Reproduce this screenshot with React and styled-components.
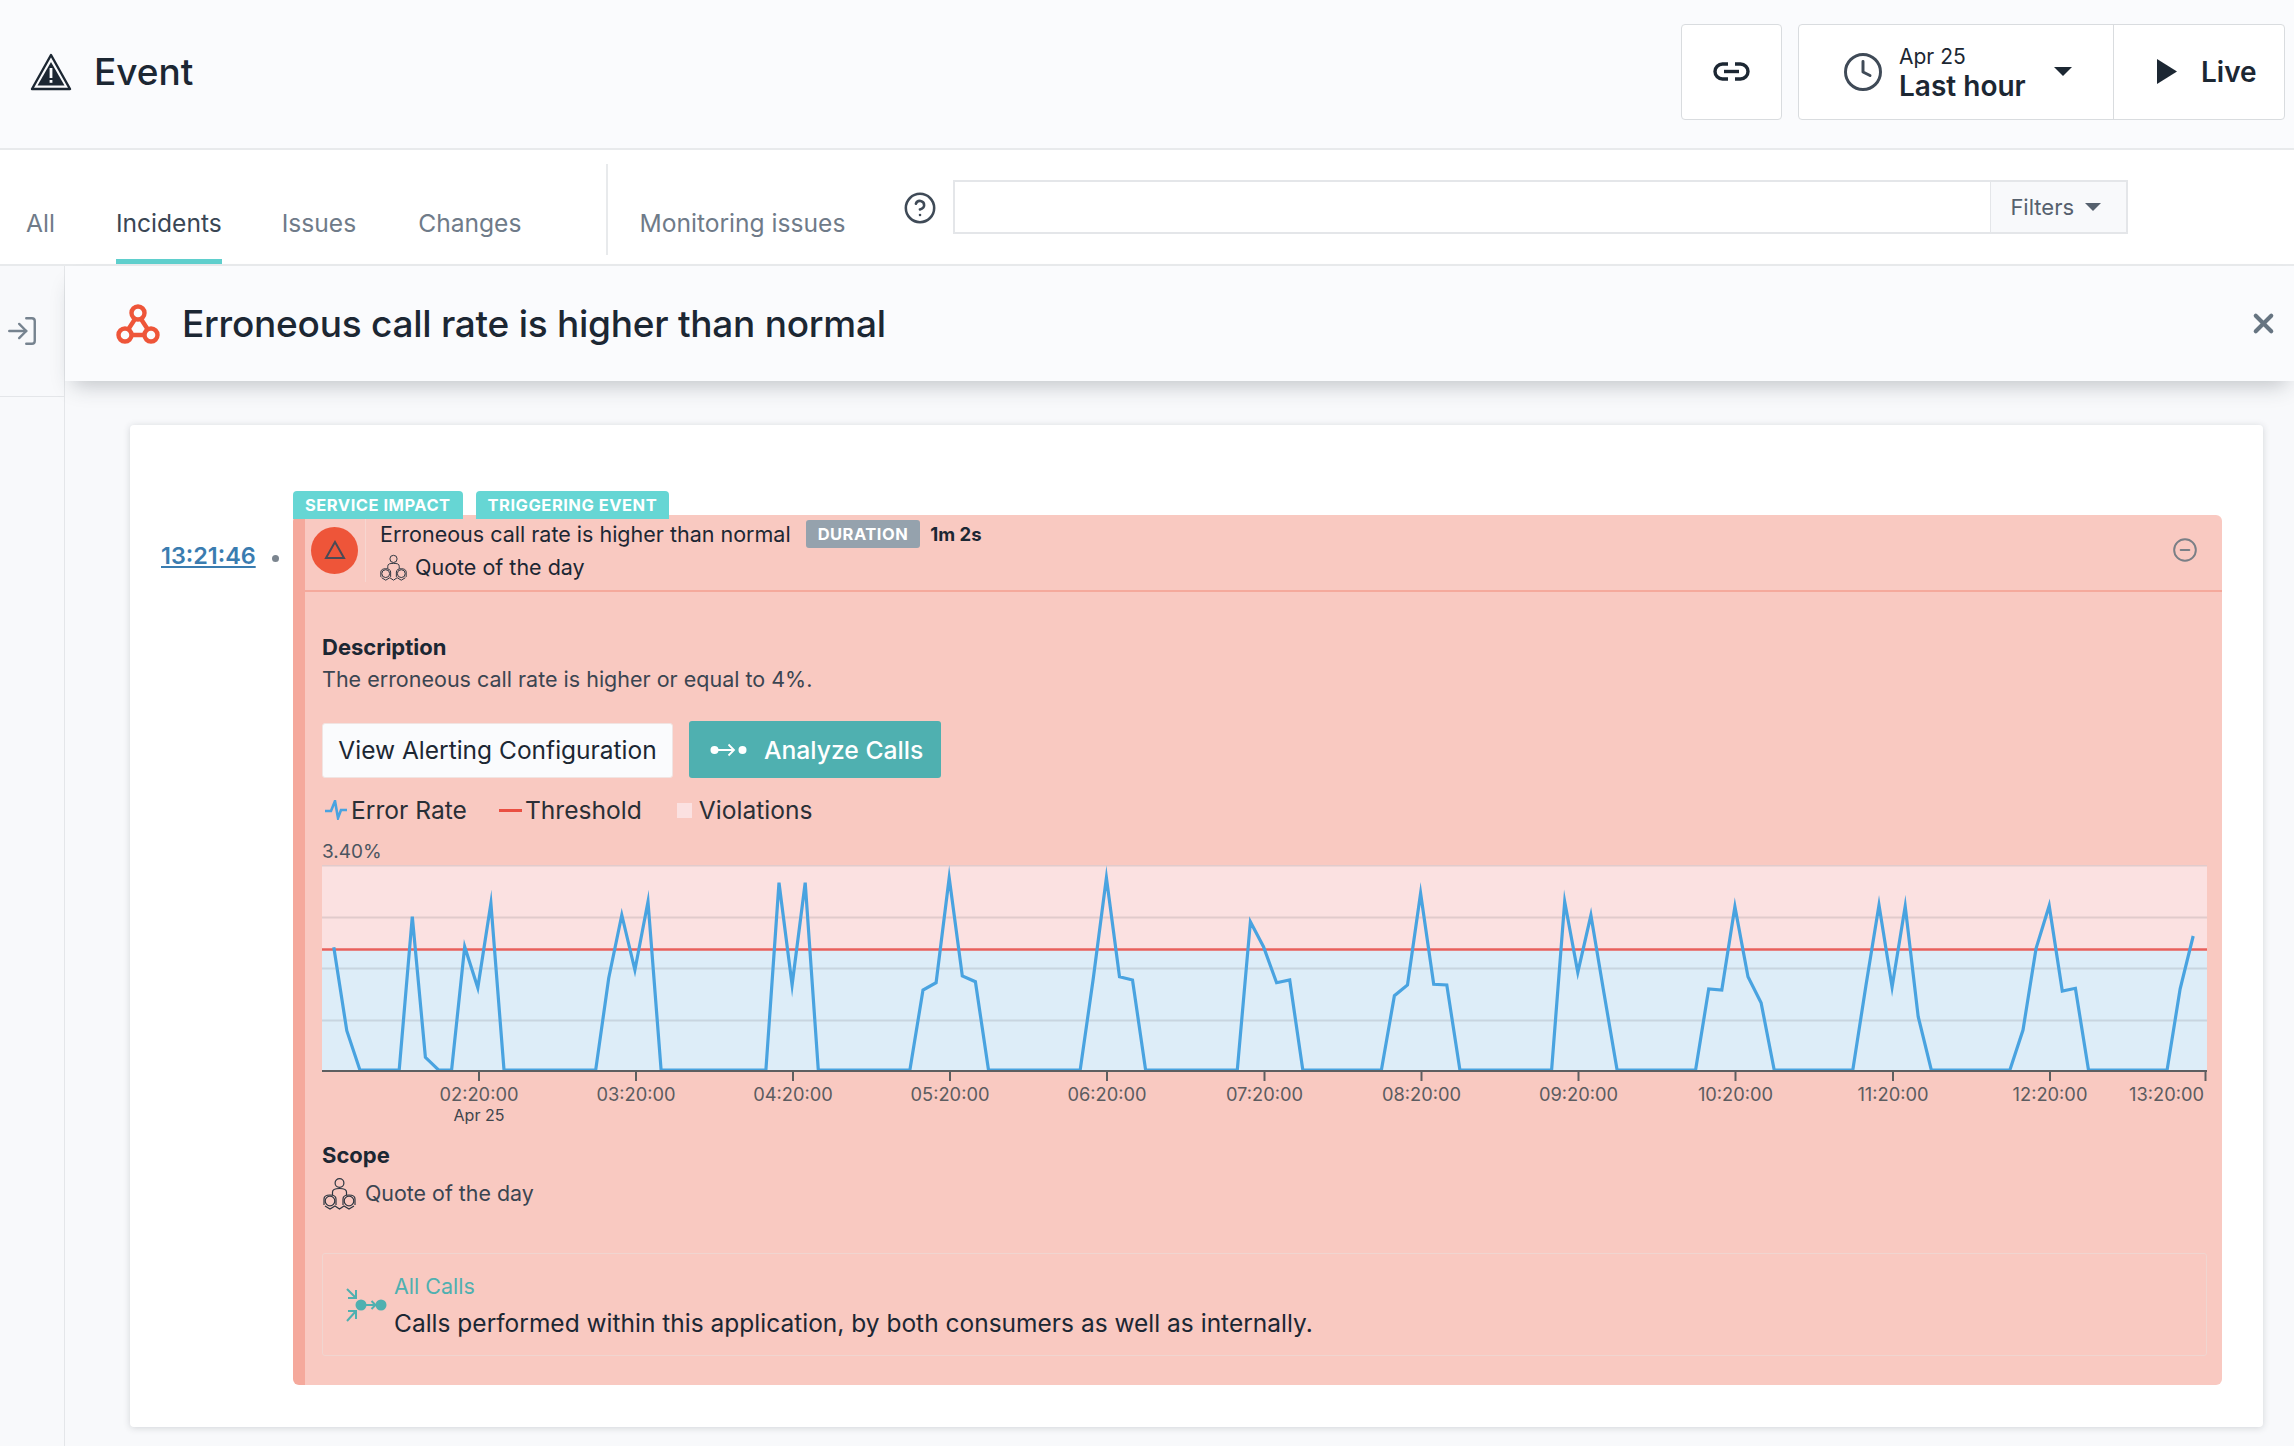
import styled, { createGlobalStyle } from 'styled-components'
import { Clock, HelpCircle, LogIn, X, MinusCircle } from 'lucide-react'

const GlobalStyle = createGlobalStyle`
  html, body { margin:0; padding:0; background:#fff; }
  body { font-family:Inter, "Liberation Sans", sans-serif; color:#1c2733; }
`

const Page = styled.div`
  width:2294px;
  height:1446px;
  overflow:hidden;
  display:flex;
  flex-direction:column;
`

const TopBar = styled.header`
  height:150px;
  flex:none;
  box-sizing:border-box;
  background:#fafbfd;
  border-bottom:2px solid #e8eaec;
  display:flex;
  align-items:center;
  padding:0 9px 5px 30px;
`

const PageTitle = styled.h1`
  margin:0 0 0 22px;
  font-size:37px;
  font-weight:500;
  flex:1;
`

const IconButton = styled.div`
  width:101px;
  height:96px;
  box-sizing:border-box;
  border:1px solid #d9dcdf;
  border-radius:4px;
  background:#fff;
  display:flex;
  align-items:center;
  justify-content:center;
  margin-right:16px;
`

const TimeGroup = styled.div`
  width:487px;
  height:96px;
  box-sizing:border-box;
  border:1px solid #d9dcdf;
  border-radius:4px;
  background:#fff;
  display:flex;
`

const TimeRange = styled.div`
  width:315px;
  box-sizing:border-box;
  border-right:1px solid #d9dcdf;
  display:flex;
  align-items:center;
  padding-left:43px;
`

const DateStack = styled.div`
  margin:2px 0 0 15px;
  width:155px;
  line-height:1;
`

const DateSmall = styled.div`
  font-size:21px;
  height:26px;
  line-height:26px;
`

const DateBig = styled.div`
  font-size:28px;
  font-weight:600;
  height:32px;
  line-height:32px;
`

const Caret = styled.span`
  display:block;
  width:0;
  height:0;
  border-left:${p => p.size}px solid transparent;
  border-right:${p => p.size}px solid transparent;
  border-top:${p => p.size}px solid ${p => p.color};
`

const LiveButton = styled.div`
  flex:1;
  display:flex;
  align-items:center;
  padding-left:43px;
  gap:24px;
  font-size:28px;
  font-weight:600;
`

const TabsBar = styled.nav`
  height:116px;
  flex:none;
  box-sizing:border-box;
  background:#fff;
  border-bottom:2px solid #e8eaec;
  display:flex;
  align-items:stretch;
  padding-left:26px;
`

const Tab = styled.div`
  margin-right:${p => p.gap}px;
  display:flex;
  align-items:flex-end;
  padding-bottom:26px;
  box-sizing:border-box;
  height:114px;
  font-size:24.6px;
  line-height:30px;
  color:${p => p.active ? '#3a4654' : '#6f7b89'};
  ${p => p.active && `border-bottom:5px solid #5fcfcd; padding-bottom:21px;`}
`

const TabDivider = styled.div`
  width:2px;
  height:91px;
  margin:14px 31px 0 0;
  background:#e8eaec;
`

const HelpSlot = styled.div`
  margin-left:58px;
  margin-right:16px;
  padding-top:41px;
  color:#3f4a57;
`

const SearchBox = styled.div`
  margin-top:30px;
  width:1175px;
  height:54px;
  box-sizing:border-box;
  border:2px solid #e4e6e9;
  background:#fff;
  display:flex;
  justify-content:flex-end;
`

const FiltersButton = styled.div`
  width:136px;
  box-sizing:border-box;
  border-left:1px solid #e4e6e9;
  background:#f8f9fb;
  display:flex;
  align-items:center;
  gap:11px;
  padding-left:19px;
  font-size:22px;
  color:#56616e;
`

const Body = styled.div`
  flex:1;
  display:flex;
  min-height:0;
`

const SideRail = styled.aside`
  width:65px;
  flex:none;
  box-sizing:border-box;
  border-right:1px solid #e4e6e9;
  background:#f8f9fb;
`

const RailSlot = styled.div`
  height:131px;
  box-sizing:border-box;
  border-bottom:1px solid #e4e6e9;
  padding:48px 0 0 5px;
  color:#76838f;
`

const Main = styled.main`
  flex:1;
  min-width:0;
  background:#f8f9fb;
`

const PanelHeader = styled.div`
  height:115px;
  box-sizing:border-box;
  background:#fafbfd;
  box-shadow:0 12px 20px -8px rgba(40,50,60,0.28);
  display:flex;
  align-items:center;
  padding:0 15px 0 51px;
  position:relative;
`

const PanelTitle = styled.h2`
  margin:0 0 0 22px;
  flex:1;
  font-size:37px;
  font-weight:500;
  letter-spacing:-0.25px;
`

const Card = styled.section`
  margin:44px 31px 0 65px;
  height:1002px;
  box-sizing:border-box;
  padding:66px 41px 0 31px;
  background:#fff;
  border-radius:4px;
  box-shadow:0 1px 7px rgba(40,50,60,0.18);
  display:flex;
`

const TimeCell = styled.div`
  width:132px;
  flex:none;
  padding-top:53px;
  display:flex;
  align-items:center;
  height:24px;
  gap:16px;
`

const TimeLink = styled.a`
  font-size:23.4px;
  font-weight:600;
  line-height:24px;
  color:#3a7cb0;
  text-decoration:underline;
`

const TimeDot = styled.span`
  width:7px;
  height:7px;
  margin-top:4px;
  border-radius:50%;
  background:#7b858f;
`

const EventColumn = styled.div`
  flex:1;
  min-width:0;
`

const TagRow = styled.div`
  height:24px;
  display:flex;
  gap:13px;
  position:relative;
  z-index:1;
`

const Tag = styled.span`
  height:28px;
  box-sizing:border-box;
  padding:0 12px;
  border-radius:4px 4px 0 0;
  background:#66d6d4;
  color:#fff;
  font-size:16.5px;
  font-weight:700;
  letter-spacing:0.5px;
  line-height:29px;
`

const EventBox = styled.div`
  height:870px;
  box-sizing:border-box;
  background:#f9c9c1;
  border-left:12px solid #f5a99c;
  border-radius:6px;
`

const EventHead = styled.div`
  height:77px;
  box-sizing:border-box;
  border-bottom:2px solid #f5a99c;
  display:flex;
  align-items:center;
  padding:0 24px 0 6px;
`

const SeverityDot = styled.div`
  width:47px;
  height:47px;
  margin-bottom:5px;
  flex:none;
  border-radius:50%;
  background:#ee5539;
  display:flex;
  align-items:center;
  justify-content:center;
`

const HeadText = styled.div`
  flex:1;
  margin:0 0 6px 7px;
  height:64px;
  padding-left:14px;
  border-left:1px solid #f7d6d0;
  font-size:21.5px;
`

const HeadLine = styled.div`
  display:flex;
  align-items:center;
  height:33px;
`

const HeadSecond = styled(HeadLine)`
  height:33px;
  gap:8px;
`

const DurationBadge = styled.span`
  margin-left:15px;
  height:28px;
  padding:0 12px;
  border-radius:3px;
  background:#95a2ad;
  color:#fff;
  font-size:16.5px;
  font-weight:700;
  letter-spacing:0.5px;
  line-height:29px;
`

const DurationValue = styled.span`
  margin-left:10px;
  font-size:18.5px;
  font-weight:700;
`

const Collapse = styled.div`
  margin-bottom:5px;
  display:flex;
  color:#7a7f86;
`

const EventBody = styled.div`
  padding:41px 15px 0 17px;
`

const SectionLabel = styled.div`
  font-size:22px;
  font-weight:700;
  line-height:28px;
`

const Paragraph = styled.div`
  margin-top:4px;
  font-size:21.5px;
  line-height:28px;
  color:#3b4551;
`

const ButtonRow = styled.div`
  margin-top:28px;
  display:flex;
  align-items:flex-end;
  gap:16px;
`

const PlainButton = styled.div`
  width:351px;
  height:55px;
  box-sizing:border-box;
  border:1px solid #f1e4e2;
  border-radius:3px;
  background:#fafbfd;
  font-size:24.5px;
  line-height:53px;
  text-align:center;
`

const TealButton = styled.div`
  width:252px;
  height:57px;
  border-radius:3px;
  background:#4fb0b0;
  color:#fff;
  font-size:24.7px;
  font-weight:500;
  display:flex;
  align-items:center;
  gap:17px;
  padding-left:21px;
  box-sizing:border-box;
`

const Legend = styled.div`
  margin-top:17px;
  height:30px;
  display:flex;
  align-items:center;
  font-size:24.6px;
  color:#2a2f36;
`

const LegendItem = styled.div`
  display:flex;
  align-items:center;
  gap:${p => p.gap}px;
  margin-right:${p => p.after}px;
  margin-left:${p => p.before || 0}px;
`

const ThresholdSwatch = styled.span`
  width:23px;
  height:3px;
  background:#ea4f42;
`

const ViolationSwatch = styled.span`
  width:15px;
  height:15px;
  background:#fbe1e1;
`

const ChartMax = styled.div`
  margin-top:14px;
  font-size:19px;
  line-height:26px;
  color:#4b5560;
`

const ChartSvg = styled.svg`
  display:block;
  width:1885px;
  height:270px;
  font-family:Inter, sans-serif;
`

const ScopeLabel = styled(SectionLabel)`
  margin-top:6px;
`

const ScopeRow = styled.div`
  margin-top:6px;
  height:36px;
  padding-left:1px;
  display:flex;
  align-items:center;
  gap:9px;
  font-size:21.4px;
  color:#3b4551;
`

const CallsBox = styled.div`
  margin-top:42px;
  height:103px;
  box-sizing:border-box;
  border:1px solid #f0d5d0;
  border-radius:3px;
  display:flex;
  align-items:center;
  padding:0 0 0 22px;
  gap:7px;
`

const CallsText = styled.div``

const CallsName = styled.div`
  font-size:21.5px;
  line-height:30px;
  color:#4fb0b0;
`

const CallsDescription = styled.div`
  margin-top:7px;
  font-size:24.5px;
  line-height:30px;
`

function WarningIcon() {
  return (
    <svg width="42" height="38" viewBox="0 0 42 38">
      <path d="M21 2 L40 36 H2 Z" fill="none" stroke="#1c2733" strokeWidth="2.4" strokeLinejoin="round" />
      <path d="M21 9 L34.5 32.5 H7.5 Z" fill="#1c2733" />
      <rect x="19.6" y="15" width="2.8" height="10" fill="#fafbfd" />
      <rect x="19.6" y="27" width="2.8" height="2.8" fill="#fafbfd" />
    </svg>
  )
}

function LinkIcon() {
  return (
    <svg width="37" height="19" viewBox="0 0 37 19" fill="none" stroke="#1c2733" strokeWidth="3.4">
      <path d="M15 2 H9.5 a7.5 7.5 0 0 0 0 15 H15" />
      <path d="M22 2 H27.5 a7.5 7.5 0 0 1 0 15 H22" />
      <path d="M11 9.5 H26" />
    </svg>
  )
}

function PlayIcon() {
  return (
    <svg width="20" height="25" viewBox="0 0 20 25"><path d="M0 0 L20 12.5 L0 25 Z" fill="#1c2733" /></svg>
  )
}

function ClusterIcon() {
  return (
    <svg width="44" height="40" viewBox="0 0 44 40" fill="none" stroke="#ee5539" strokeWidth="4.4">
      <circle cx="22" cy="9" r="6.5" />
      <circle cx="9" cy="31" r="6.5" />
      <circle cx="35" cy="31" r="6.5" />
      <path d="M19 15 L12.5 25 M25 15 L31.5 25 M15.5 31 H28.5" />
    </svg>
  )
}

function AppIcon({ size }) {
  return (
    <svg width={size} height={size} viewBox="0 0 33 33" fill="none" stroke="#2d3540" strokeWidth="1.2">
      <circle cx="16.5" cy="6" r="4.4" />
      <path d="M9.5 18 V15 C9.5 12 12 11.5 16.5 11.5 C21 11.5 23.5 12 23.5 15 V18" />
      <circle cx="7" cy="24" r="4.8" />
      <circle cx="26" cy="24" r="4.8" />
      <path d="M1 28 V22 C1 19 4 18 7 18 C10 18 13 19 13 22 V28" />
      <path d="M20 28 V22 C20 19 23 18 26 18 C29 18 32 19 32 22 V28" />
      <path d="M2 29 L7 32 L12 29 L16.5 32 L21 29 L26 32 L31 29" />
    </svg>
  )
}

function AnalyzeIcon() {
  return (
    <svg width="37" height="14" viewBox="0 0 37 14" fill="none" stroke="#fff" strokeWidth="1.8">
      <circle cx="4.5" cy="7" r="4" fill="#fff" stroke="none" />
      <circle cx="32.5" cy="7" r="4" fill="#fff" stroke="none" />
      <path d="M8 7 H24 M18.5 1.5 L24 7 L18.5 12.5" />
    </svg>
  )
}

function PulseIcon() {
  return (
    <svg width="22" height="20" viewBox="0 0 22 20" fill="none" stroke="#49a3e0" strokeWidth="2.6">
      <path d="M0 11 H6 L10 1 L13 18 L16 10 H22" />
    </svg>
  )
}

function AllCallsIcon() {
  return (
    <svg width="42" height="36" viewBox="0 0 42 36" fill="none" stroke="#4fb0b0" strokeWidth="2">
      <path d="M2 2 L11 11 M11 3 V11 H3" />
      <path d="M2 34 L11 24 M3 24 H11 V32" />
      <circle cx="16" cy="18" r="5.5" fill="#4fb0b0" stroke="none" />
      <circle cx="36" cy="18" r="5.5" fill="#4fb0b0" stroke="none" />
      <path d="M21 18 H30 M26.5 14 L30.5 18 L26.5 22" />
    </svg>
  )
}

// y values read off the reference, one sample each 5 minutes
const samples = [
  322, 572, 690, 690, 690, 690, 230, 652, 690, 690, 320, 443, 190, 690, 690, 690, 690, 690, 690, 690,
  690, 415, 225, 390, 185, 690, 690, 690, 690, 690, 690, 690, 690, 690, 128, 435, 128, 690, 690, 690,
  690, 690, 690, 690, 690, 450, 428, 113, 408, 425, 690, 690, 690, 690, 690, 690, 690, 690, 415, 113,
  410, 420, 690, 690, 690, 690, 690, 690, 690, 690, 245, 320, 428, 420, 690, 690, 690, 690, 690, 690,
  690, 467, 435, 160, 433, 435, 690, 690, 690, 690, 690, 690, 690, 690, 185, 397, 226, 460, 690, 690,
  690, 690, 690, 690, 690, 447, 450, 200, 410, 488, 690, 690, 690, 690, 690, 690, 690, 437, 195, 441,
  199, 530, 690, 690, 690, 690, 690, 690, 690, 570, 325, 197, 453, 445, 690, 690, 690, 690, 690, 690,
  690, 447, 288,
]

const hourTicks = [
  [157, '02:20:00'], [314, '03:20:00'], [471, '04:20:00'], [628, '05:20:00'], [785, '06:20:00'],
  [942.5, '07:20:00'], [1099.5, '08:20:00'], [1256.5, '09:20:00'], [1413.5, '10:20:00'],
  [1571, '11:20:00'], [1728, '12:20:00'],
]

function ErrorChart() {
  const points = samples
    .map((y, i) => `${(11.75 + i * 13.095).toFixed(1)},${(y / 3 - 25).toFixed(1)}`)
    .join(' ')

  return (
    <ChartSvg viewBox="0 0 1885 270">
      <rect x="0" y="0" width="1885" height="84" fill="#fbe1e1" />
      <rect x="0" y="84" width="1885" height="122" fill="#ddedf8" />
      {[0, 52, 103, 155].map(y => (
        <line key={y} x1="0" x2="1885" y1={y + 0.5} y2={y + 0.5} stroke="#50505a" strokeOpacity="0.15" strokeWidth="2" />
      ))}
      <line x1="0" x2="1885" y1="84.5" y2="84.5" stroke="#e8605c" strokeWidth="2.4" />
      <polyline points={points} fill="none" stroke="#49a3e0" strokeWidth="3.2" strokeMiterlimit="10" />
      <line x1="0" x2="1885" y1="206" y2="206" stroke="#5e5e60" strokeWidth="2" />
      {hourTicks.map(([x, label]) => (
        <g key={label}>
          <line x1={x} x2={x} y1="206" y2="216" stroke="#5e5e60" strokeWidth="2" />
          <text x={x} y="236" textAnchor="middle" fontSize="18.3" fill="#5c5c60">{label}</text>
        </g>
      ))}
      <line x1="1883.5" x2="1883.5" y1="206" y2="216" stroke="#5e5e60" strokeWidth="2" />
      <text x="1882" y="236" textAnchor="end" fontSize="18.3" fill="#5c5c60">13:20:00</text>
      <text x="157" y="256" textAnchor="middle" fontSize="16" fill="#3f454c">Apr 25</text>
    </ChartSvg>
  )
}

export default function App() {
  return (
    <Page>
      <GlobalStyle />
      <TopBar>
        <WarningIcon />
        <PageTitle>Event</PageTitle>
        <IconButton><LinkIcon /></IconButton>
        <TimeGroup>
          <TimeRange>
            <Clock size={42} strokeWidth={1.7} color="#3f4a57" />
            <DateStack>
              <DateSmall>Apr 25</DateSmall>
              <DateBig>Last hour</DateBig>
            </DateStack>
            <Caret size={9} color="#1c2733" />
          </TimeRange>
          <LiveButton><PlayIcon />Live</LiveButton>
        </TimeGroup>
      </TopBar>

      <TabsBar>
        <Tab gap={61}>All</Tab>
        <Tab gap={60} active>Incidents</Tab>
        <Tab gap={62}>Issues</Tab>
        <Tab gap={85}>Changes</Tab>
        <TabDivider />
        <Tab gap={0}>Monitoring issues</Tab>
        <HelpSlot><HelpCircle size={34} strokeWidth={1.8} /></HelpSlot>
        <SearchBox>
          <FiltersButton>Filters<Caret size={8} color="#56616e" /></FiltersButton>
        </SearchBox>
      </TabsBar>

      <Body>
        <SideRail>
          <RailSlot><LogIn size={34} strokeWidth={1.7} /></RailSlot>
        </SideRail>
        <Main>
          <PanelHeader>
            <ClusterIcon />
            <PanelTitle>Erroneous call rate is higher than normal</PanelTitle>
            <X size={31} strokeWidth={3.2} color="#667481" />
          </PanelHeader>
          <Card>
            <TimeCell>
              <TimeLink>13:21:46</TimeLink>
              <TimeDot />
            </TimeCell>
            <EventColumn>
              <TagRow>
                <Tag>SERVICE IMPACT</Tag>
                <Tag>TRIGGERING EVENT</Tag>
              </TagRow>
              <EventBox>
                <EventHead>
                  <SeverityDot>
                    <svg width="22" height="20" viewBox="0 0 22 20" fill="none" stroke="#4a4a55" strokeWidth="2"><path d="M11 2 L20 18 H2 Z" /></svg>
                  </SeverityDot>
                  <HeadText>
                    <HeadLine>
                      Erroneous call rate is higher than normal
                      <DurationBadge>DURATION</DurationBadge>
                      <DurationValue>1m 2s</DurationValue>
                    </HeadLine>
                    <HeadSecond><AppIcon size={27} />Quote of the day</HeadSecond>
                  </HeadText>
                  <Collapse><MinusCircle size={26} strokeWidth={1.8} /></Collapse>
                </EventHead>
                <EventBody>
                  <SectionLabel>Description</SectionLabel>
                  <Paragraph>The erroneous call rate is higher or equal to 4%.</Paragraph>
                  <ButtonRow>
                    <PlainButton>View Alerting Configuration</PlainButton>
                    <TealButton><AnalyzeIcon />Analyze Calls</TealButton>
                  </ButtonRow>
                  <Legend>
                    <LegendItem gap={4} after={32} before={3}><PulseIcon />Error Rate</LegendItem>
                    <LegendItem gap={3} after={35}><ThresholdSwatch />Threshold</LegendItem>
                    <LegendItem gap={7} after={0}><ViolationSwatch />Violations</LegendItem>
                  </Legend>
                  <ChartMax>3.40%</ChartMax>
                  <ErrorChart />
                  <ScopeLabel>Scope</ScopeLabel>
                  <ScopeRow><AppIcon size={33} />Quote of the day</ScopeRow>
                  <CallsBox>
                    <AllCallsIcon />
                    <CallsText>
                      <CallsName>All Calls</CallsName>
                      <CallsDescription>Calls performed within this application, by both consumers as well as internally.</CallsDescription>
                    </CallsText>
                  </CallsBox>
                </EventBody>
              </EventBox>
            </EventColumn>
          </Card>
        </Main>
      </Body>
    </Page>
  )
}
